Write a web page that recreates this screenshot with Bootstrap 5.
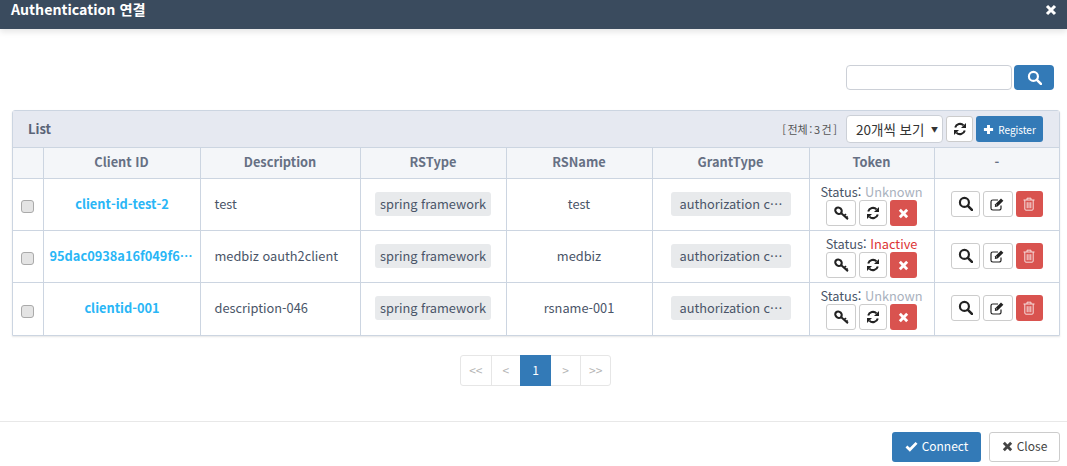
<!DOCTYPE html>
<html lang="ko">
<head>
  <meta charset="UTF-8">
  <title>Authentication 연결</title>
  <link href="https://cdn.jsdelivr.net/npm/bootstrap@5.3.0/dist/css/bootstrap.min.css" rel="stylesheet">
  <style>
    html, body { height: 466px; overflow: hidden; }
    body { font-family: "Noto Sans CJK KR", "Noto Sans", sans-serif; font-size: 13px; color: #4a5568; background: #fff; }
    svg { display: block; }
    .modal-top { height: 29px; background: #3a4b5e; color: #fff; box-shadow: 0 3px 6px rgba(0,0,0,.1); padding: 0 10px 0 11px; position: relative; }
    .modal-top h1 { font-size: 14.2px; font-weight: 700; line-height: 19px; margin: 0; }
    .modal-mid { height: 392px; padding: 36px 7px 0 12px; }
    .search-row { height: 25px; padding-right: 6px; margin-bottom: 20px; }
    .search-input { width: 166px; height: 25px; border: 1px solid #ccd0d7; border-radius: 4px; background: #fff; padding: 0 6px; }
    .search-btn { width: 40px; height: 25px; margin-left: 2px; background: #337ab7; border-radius: 4px; border: 0; }
    .list-panel { width: 1048px; border: 1px solid #ccd5e1; border-radius: 3px 3px 0 0; box-shadow: 0 1px 2px rgba(0,0,0,.1); }
    .list-head { height: 36px; background: #e6e9f1; padding: 0 16px 0 15px; }
    .list-head .list-title { font-size: 13px; font-weight: 700; color: #5a6478; margin-right: auto; }
    .total { font-size: 11px; color: #555; margin-right: 9px; white-space: nowrap; word-spacing: -1.5px; }
    .size-select { width: 97px; height: 28px; border: 1px solid #ccd0d7; border-radius: 4px; background: #fff; color: #333; font-size: 13.5px; padding: 0 4px 0 9px; margin-right: 3px; white-space: nowrap; }
    .size-select i { font-style: normal; font-size: 7px; margin-left: auto; }
    .btn-plain { height: 26px; border: 1px solid #ccc; border-radius: 3px; background: #fff; padding: 0; color: #222; }
    .btn-fill { height: 26px; border: 0; border-radius: 3px; background: #d9534f; padding: 0; }
    .reg-btn { width: 67px; height: 26px; background: #337ab7; border: 0; border-radius: 3px; color: #fff; font-size: 10px; padding: 0; margin-left: 3px; }
    .list-table { width: 1046px; table-layout: fixed; border-collapse: collapse; margin: 0; }
    .list-table th, .list-table td { border: 1px solid #ccd5e1; text-align: center; vertical-align: middle; padding: 0; }
    .list-table tr > :first-child { border-left: 0; }
    .list-table tr > :last-child { border-right: 0; }
    .list-table tr:last-child td { border-bottom: 0; }
    .list-table th { height: 31px; background: #f4f6f9; color: #667084; font-size: 12.8px; font-weight: 700; padding-bottom: 2px; }
    .list-table td { height: 52px; color: #4a5568; font-size: 12.8px; }
    .list-table td.cell-up { padding-bottom: 2px; }
    .list-table td.desc { text-align: left; padding-left: 14px; }
    .client-link { display: block; font-weight: 700; color: #29b6f6; font-size: 12.8px; text-decoration: none; white-space: nowrap; overflow: hidden; text-overflow: ellipsis; padding: 0 5px 0 6px; }
    .gray-tag { display: inline-block; background: #e8eaec; border-radius: 3px; height: 24px; line-height: 24px; padding: 0 5px; white-space: nowrap; overflow: hidden; text-overflow: ellipsis; vertical-align: middle; }
    .tag-grant { width: 120px; padding: 0 5px 0 9px; }
    .row-check { width: 13px; height: 13px; margin: 1px 0 0 -1px; vertical-align: middle; background: #e4e4e4; border: 1px solid #aaa; border-radius: 3px; display: inline-block; }
    .status-line { font-size: 12.8px; line-height: 17px; white-space: nowrap; }
    .st-unknown { color: #a9b1bd; }
    .st-inactive { color: #dc3535; }
    .tok-key { width: 30px; }
    .tok-ref { width: 28px; }
    .tok-del { width: 27px; }
    .act-find { width: 29px; }
    .act-edit { width: 30px; }
    .act-del { width: 27px; }
    .tok-row, .act-row { gap: 3px; }
    .act-del { color: #f6dedd; }
    .pager { width: 151px; height: 31px; margin: 19px 0 0 448px; border: 1px solid #e6e6e6; border-radius: 3px; color: #b5b5b5; font-size: 12px; }
    .pager span { width: 30px; border-left: 1px solid #e6e6e6; }
    .pager span:first-child { border-left: 0; }
    .pager .cur { width: 31px; background: #337ab7; color: #fff; border: 0; height: 31px; margin-top: -1px; }
    .pager .cur + span { border-left: 0; }
    .modal-bottom { height: 45px; border-top: 1px solid #e8e8e8; padding: 10px 7px 0 0; }
    .foot-btn { height: 30px; border-radius: 3px; font-size: 12px; padding: 0 0 2px; }
    .foot-connect { width: 89px; background: #337ab7; border: 0; color: #fff; margin-right: 8px; }
    .foot-close { width: 71px; background: #fff; border: 1px solid #ccc; color: #444; }
  </style>
</head>
<body>
  <svg width="0" height="0" style="position:absolute">
    <defs>
      <symbol id="i-search" viewBox="0 0 14 14"><circle cx="6" cy="6" r="4.2" fill="none" stroke="currentColor" stroke-width="2"/><path d="M9.2 9.2L13 13" stroke="currentColor" stroke-width="2.4" stroke-linecap="round"/></symbol>
      <symbol id="i-refresh" viewBox="0 0 14 14"><path d="M2.2 5.6A5 5 0 0 1 10.6 3.4" fill="none" stroke="currentColor" stroke-width="2"/><path d="M13 1v5H8z" fill="currentColor"/><path d="M11.8 8.4A5 5 0 0 1 3.4 10.6" fill="none" stroke="currentColor" stroke-width="2"/><path d="M1 13V8h5z" fill="currentColor"/></symbol>
      <symbol id="i-key" viewBox="0 0 14 14"><ellipse cx="4.2" cy="4.4" rx="3.2" ry="2.8" transform="rotate(45 4.2 4.4)" fill="none" stroke="currentColor" stroke-width="2"/><path d="M6.8 6.8L13 12.4M9.4 9.2L11.2 7.6M11.4 11L12.8 9.8" stroke="currentColor" stroke-width="1.8"/></symbol>
      <symbol id="i-times" viewBox="0 0 12 12"><path d="M2 2L10 10M10 2L2 10" stroke="currentColor" stroke-width="3.1"/></symbol>
      <symbol id="i-edit" viewBox="0 0 15 14"><path d="M11 8.5V11.2A1.8 1.8 0 0 1 9.2 13H2.8A1.8 1.8 0 0 1 1 11.2V4.8A1.8 1.8 0 0 1 2.8 3H8" fill="none" stroke="currentColor" stroke-width="1.2"/><path d="M5.2 7.2L11 1.4L13.4 3.8L7.6 9.6L4.8 10z" fill="currentColor"/><path d="M6.4 7.8L7 8.4" stroke="#fff" stroke-width="1"/></symbol>
      <symbol id="i-trash" viewBox="0 0 12 14"><path d="M.5 3h11M4 3V1.2h4V3M1.8 3v9a1.2 1.2 0 0 0 1.2 1.2h6A1.2 1.2 0 0 0 10.2 12V3M4.2 5.2v6M6 5.2v6M7.8 5.2v6" fill="none" stroke="currentColor" stroke-width="1"/></symbol>
      <symbol id="i-plus" viewBox="0 0 12 12"><path d="M6 1v10M1 6h10" stroke="currentColor" stroke-width="3.2"/></symbol>
      <symbol id="i-check" viewBox="0 0 14 12"><path d="M1.5 6L5.2 9.6L12.5 2" fill="none" stroke="currentColor" stroke-width="3"/></symbol>
    </defs>
  </svg>

  <div class="modal-top d-flex justify-content-between">
    <h1>Authentication 연결</h1>
    <svg width="12" height="12" class="mt-1 text-white"><use href="#i-times"/></svg>
  </div>

  <div class="modal-mid">
    <div class="search-row d-flex justify-content-end">
      <input class="search-input" type="text">
      <button class="search-btn d-flex align-items-center justify-content-center text-white" type="button"><svg width="15" height="15"><use href="#i-search"/></svg></button>
    </div>

    <div class="list-panel">
      <div class="list-head d-flex align-items-center">
        <span class="list-title">List</span>
        <span class="total">[ 전체 : 3 건 ]</span>
        <div class="size-select d-flex align-items-center"><span>20개씩 보기</span><i>▼</i></div>
        <button class="btn-plain d-flex align-items-center justify-content-center" style="width:27px" type="button"><svg width="14" height="14"><use href="#i-refresh"/></svg></button>
        <button class="reg-btn d-flex align-items-center justify-content-center gap-1" type="button"><svg width="11" height="11"><use href="#i-plus"/></svg>Register</button>
      </div>
      <table class="list-table">
        <colgroup>
          <col style="width:30px"><col style="width:157px"><col style="width:160px"><col style="width:146px"><col style="width:146px"><col style="width:157px"><col style="width:125px"><col>
        </colgroup>
        <thead>
          <tr><th></th><th>Client ID</th><th>Description</th><th>RSType</th><th>RSName</th><th>GrantType</th><th>Token</th><th>-</th></tr>
        </thead>
        <tbody id="rows"></tbody>
      </table>
    </div>

    <div class="pager d-flex align-items-stretch">
      <span class="d-flex align-items-center justify-content-center">&lt;&lt;</span>
      <span class="d-flex align-items-center justify-content-center">&lt;</span>
      <span class="cur d-flex align-items-center justify-content-center">1</span>
      <span class="d-flex align-items-center justify-content-center">&gt;</span>
      <span class="d-flex align-items-center justify-content-center">&gt;&gt;</span>
    </div>
  </div>

  <div class="modal-bottom d-flex justify-content-end">
    <button class="foot-btn foot-connect d-flex align-items-center justify-content-center gap-1" type="button"><svg width="13" height="11"><use href="#i-check"/></svg>Connect</button>
    <button class="foot-btn foot-close d-flex align-items-center justify-content-center gap-1" type="button"><svg width="11" height="11"><use href="#i-times"/></svg>Close</button>
  </div>

  <script src="https://cdn.jsdelivr.net/npm/bootstrap@5.3.0/dist/js/bootstrap.bundle.min.js"></script>
  <script>
    var data = [
      ['client-id-test-2', 'test', 'test', 'Unknown'],
      ['95dac0938a16f049f6c2d1', 'medbiz oauth2client', 'medbiz', 'Inactive'],
      ['clientid-001', 'description-046', 'rsname-001', 'Unknown']
    ];
    function icon(name, w, h) {
      return '<svg width="' + w + '" height="' + h + '"><use href="#i-' + name + '"/></svg>';
    }
    function btn(cls, kind, inner) {
      return '<button type="button" class="' + kind + ' ' + cls + ' d-flex align-items-center justify-content-center">' + inner + '</button>';
    }
    document.getElementById('rows').innerHTML = data.map(function (r) {
      return '<tr><td><span class="row-check"></span></td>' +
        '<td class="cell-up"><a class="client-link" href="#">' + r[0] + '</a></td>' +
        '<td class="cell-up desc">' + r[1] + '</td>' +
        '<td class="cell-up"><span class="gray-tag">spring framework</span></td>' +
        '<td class="cell-up">' + r[2] + '</td>' +
        '<td class="cell-up"><span class="gray-tag tag-grant">authorization code</span></td>' +
        '<td><div class="status-line">Status: <span class="' + (r[3] === 'Inactive' ? 'st-inactive' : 'st-unknown') + '">' + r[3] + '</span></div>' +
        '<div class="tok-row d-flex justify-content-center">' +
        btn('tok-key', 'btn-plain', icon('key', 15, 15)) + btn('tok-ref', 'btn-plain', icon('refresh', 14, 14)) +
        btn('tok-del text-white', 'btn-fill', icon('times', 11, 11)) + '</div></td>' +
        '<td class="cell-up"><div class="act-row d-flex justify-content-center">' +
        btn('act-find', 'btn-plain', icon('search', 15, 15)) + btn('act-edit', 'btn-plain', icon('edit', 15, 14)) +
        btn('act-del', 'btn-fill', icon('trash', 12, 14)) + '</div></td></tr>';
    }).join('');
  </script>
</body>
</html>
